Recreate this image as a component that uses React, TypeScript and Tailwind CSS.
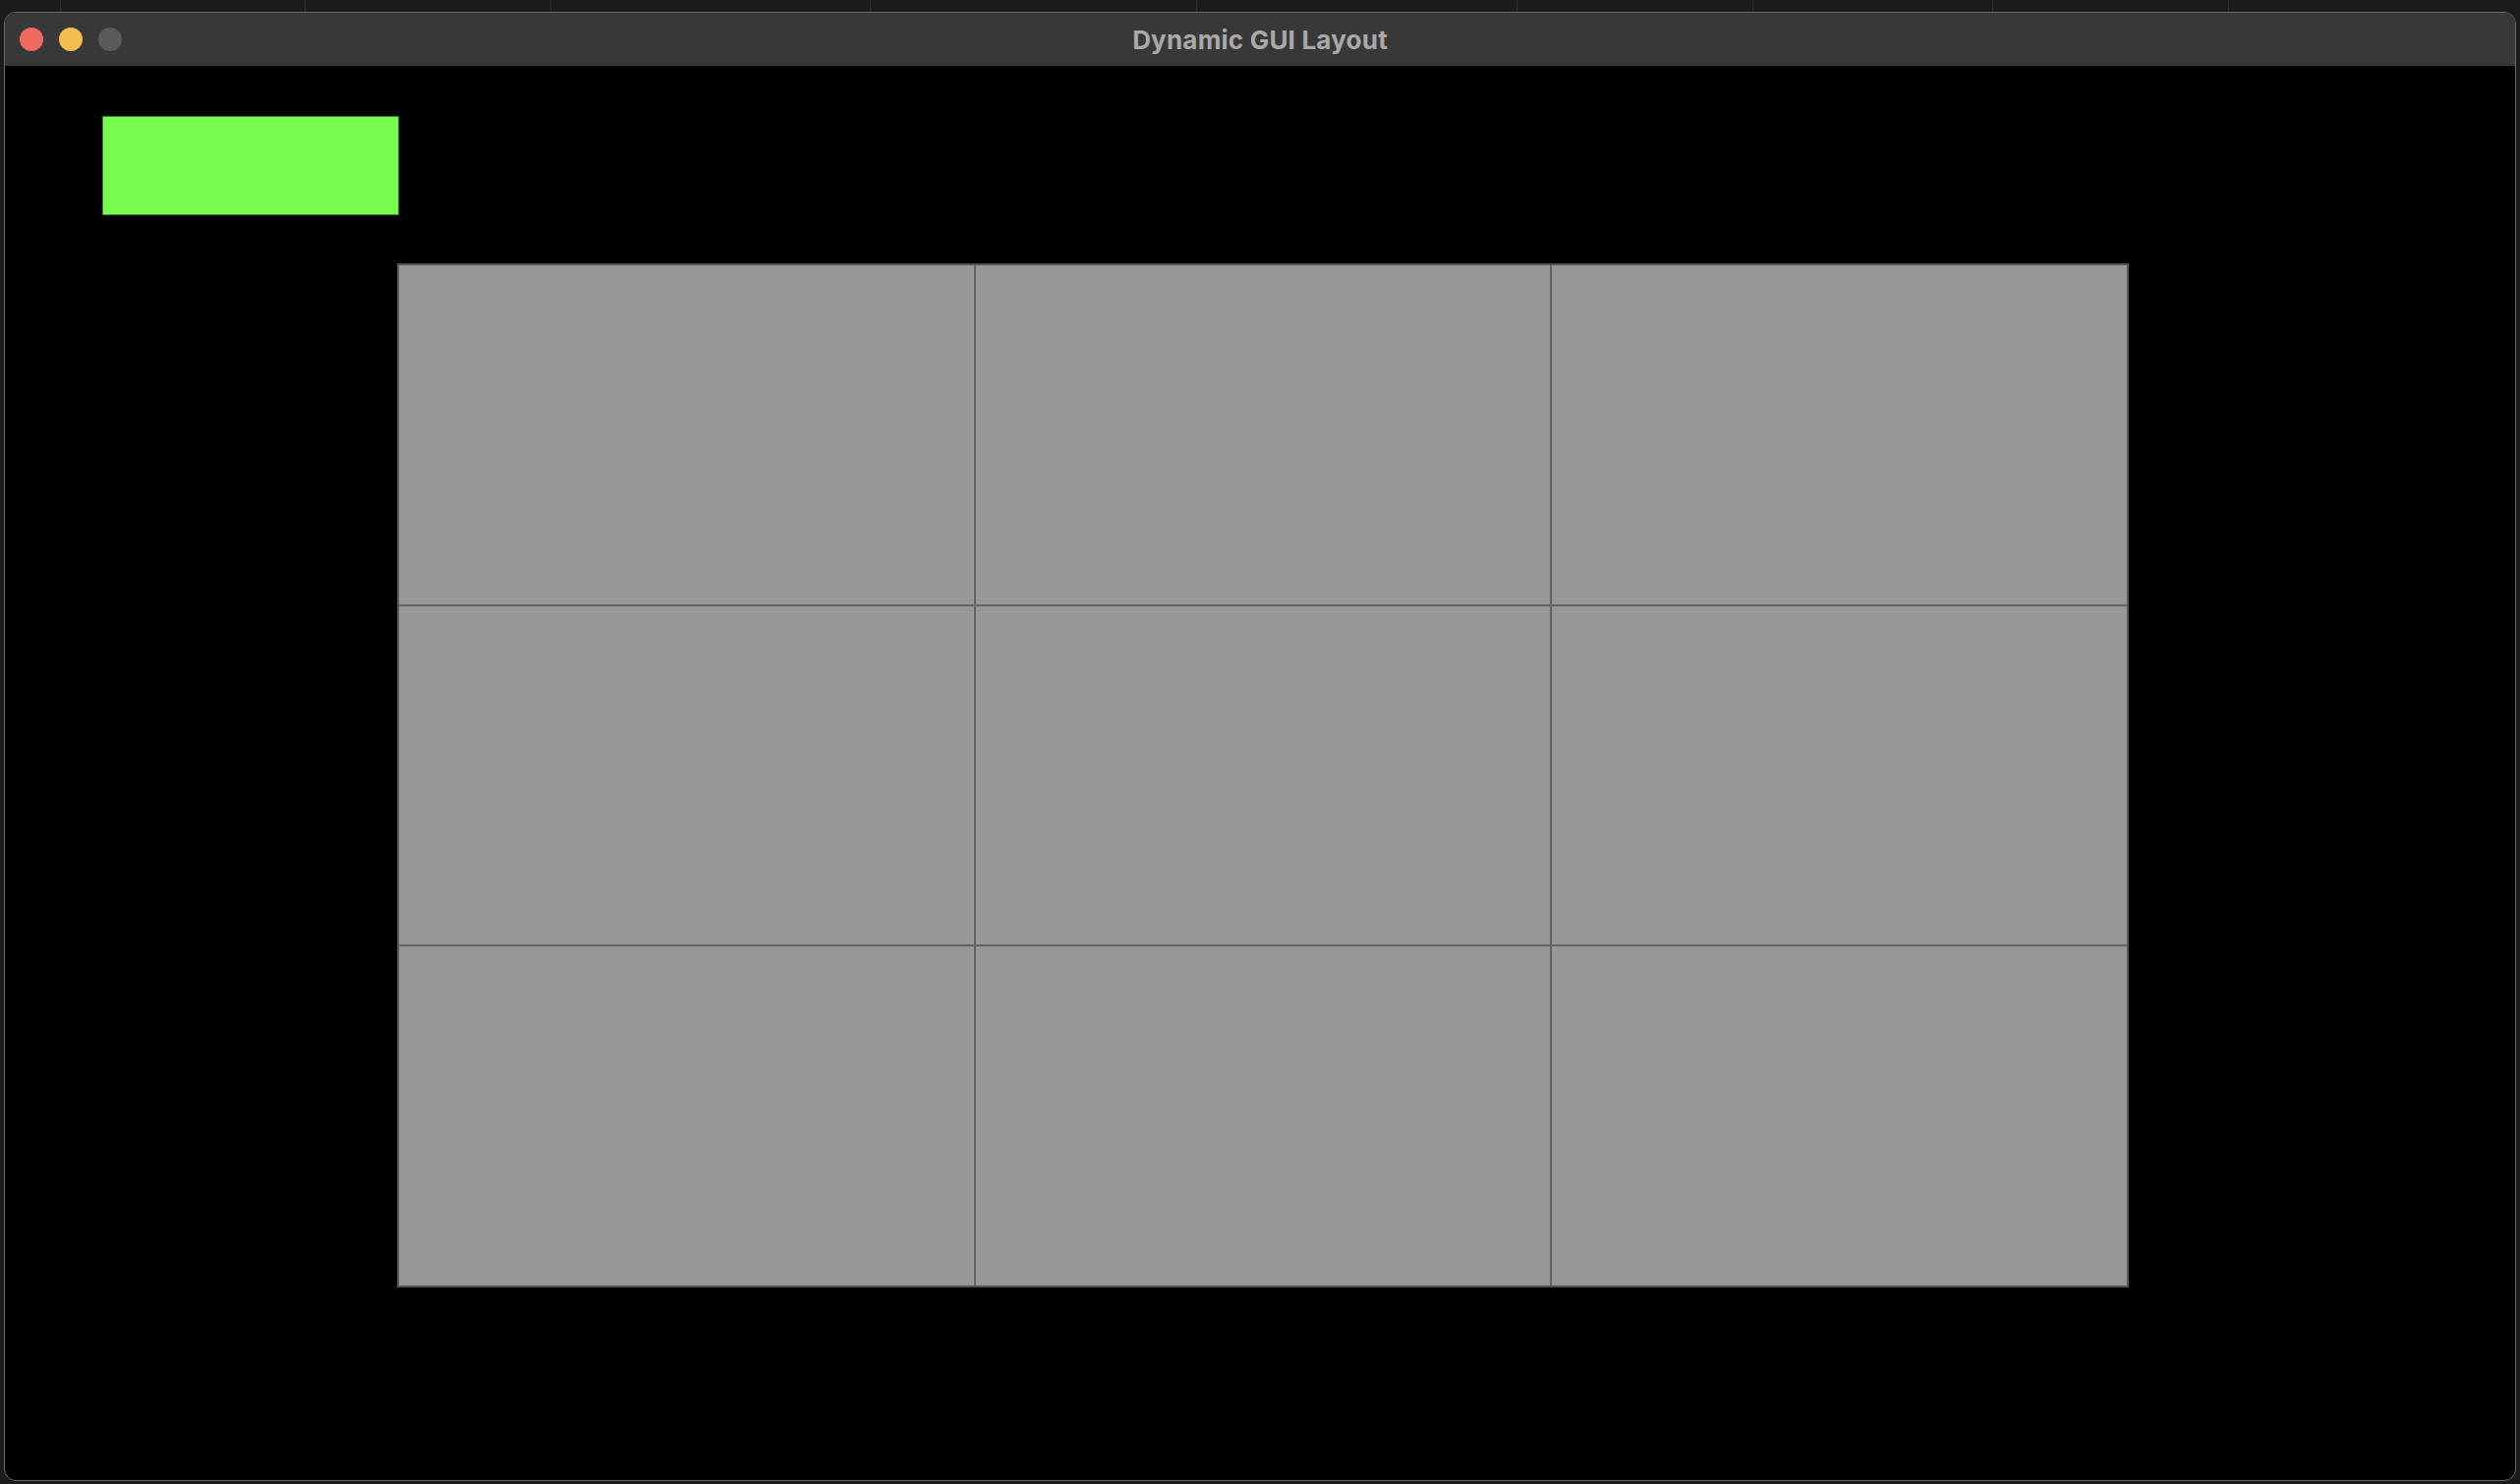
import React from "react";

const stripLines = [62, 311, 561, 886, 1218, 1544, 1784, 2028, 2268];

export default function App() {
  const segs: number[] = [];
  let prev = 0;
  for (const x of stripLines) {
    segs.push(x - prev);
    prev = x;
  }
  return (
    <div
      className="w-[2564px] h-[1510px] bg-[#1b1b1b] flex flex-col overflow-hidden"
      style={{ fontFamily: "Inter, 'Liberation Sans', sans-serif" }}
    >
      <div className="h-[12px] flex shrink-0">
        {segs.map((w, i) => (
          <div key={i} className="h-full border-r border-[#2e2e2e]" style={{ width: w }} />
        ))}
      </div>
      <div className="ml-[4px] w-[2556px] h-[1495px] flex flex-col rounded-[12px] border border-[#6a6a6a] overflow-hidden bg-black">
        <div className="h-[54px] shrink-0 bg-[#383838] flex items-center relative">
          <div className="flex items-center gap-[16px] ml-[15px]">
            <div className="w-[24px] h-[24px] rounded-full bg-[#ed6a5e]" />
            <div className="w-[24px] h-[24px] rounded-full bg-[#f4bf4f]" />
            <div className="w-[24px] h-[24px] rounded-full bg-[#5a5a5a]" />
          </div>
          <div className="absolute inset-0 flex items-center justify-center">
            <span className="text-[26px] font-bold text-[#a9a9a9] tracking-[0.2px]">Dynamic GUI Layout</span>
          </div>
        </div>
        <div className="flex-1 flex flex-col">
          <div className="ml-[99px] mt-[51px] w-[302px] h-[101px] bg-[#78fc4d] border border-[#3f7f2c]" />
          <div className="ml-[399px] mt-[49px] w-[1762px] h-[1042px] grid grid-cols-3 grid-rows-3 gap-[2px] bg-[#646464] border-2 border-[#545454]">
            {Array.from({ length: 9 }).map((_, i) => (
              <div key={i} className="bg-[#979797]" />
            ))}
          </div>
        </div>
      </div>
    </div>
  );
}
